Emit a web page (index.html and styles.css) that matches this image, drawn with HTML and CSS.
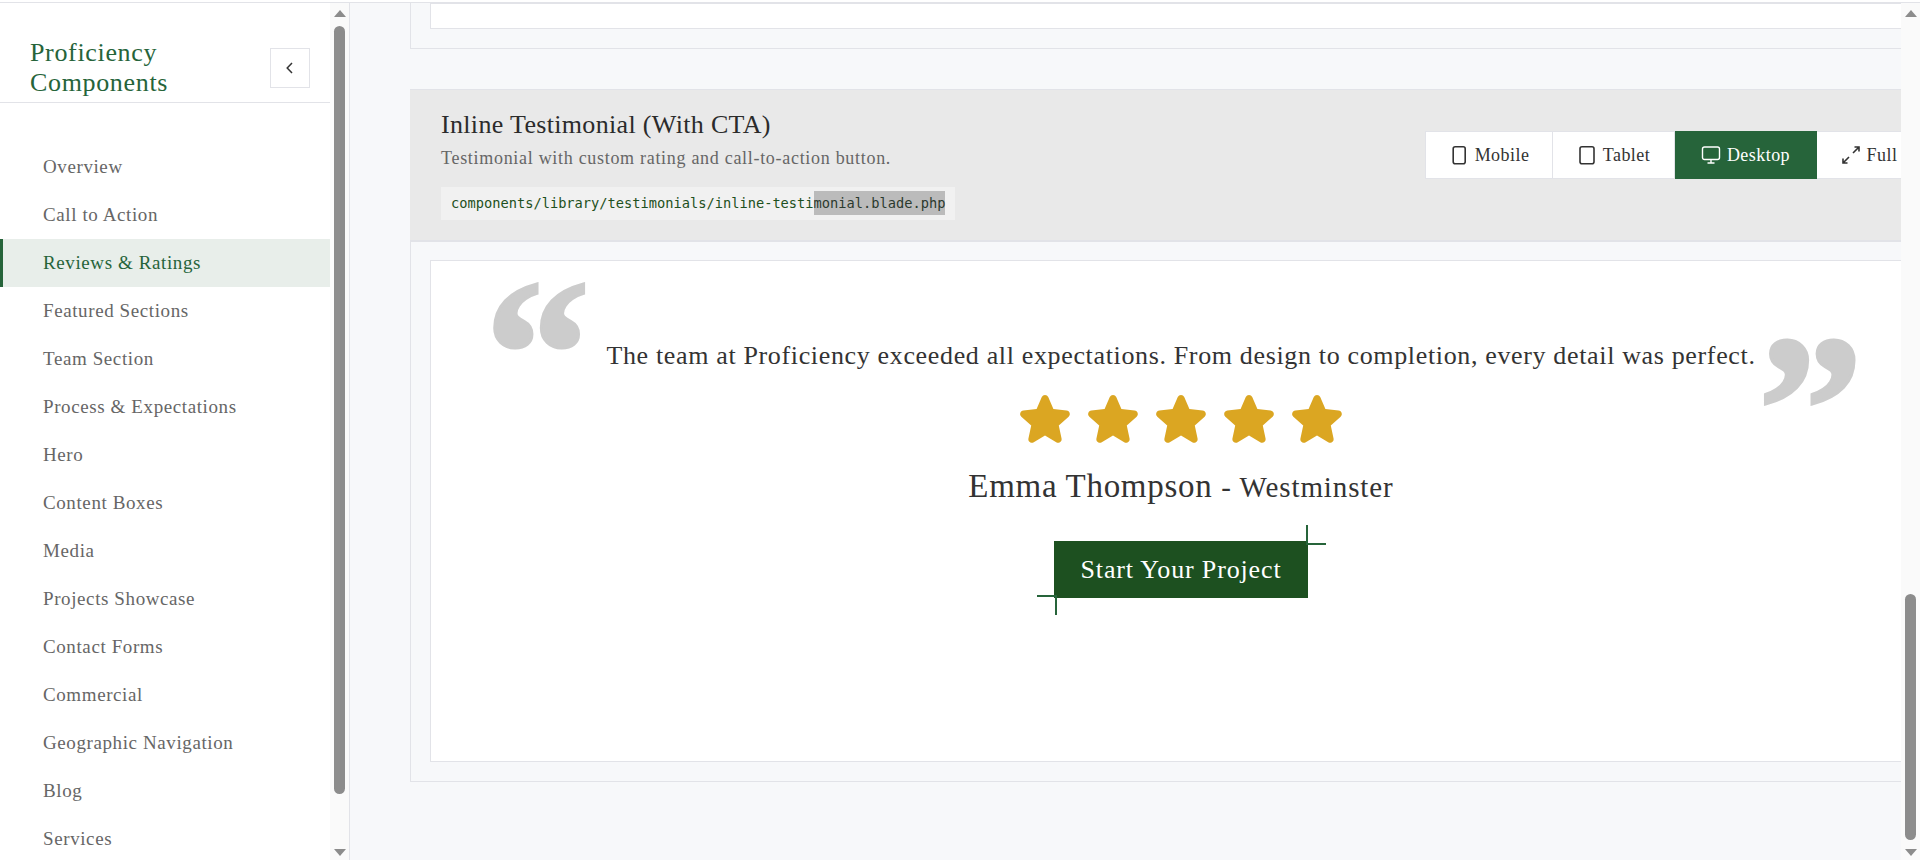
FILE: index.html
```html
<!DOCTYPE html>
<html lang="en">
<head>
    <meta charset="UTF-8">
    <title>Proficiency Components</title>
    <link rel="stylesheet" href="styles.css">
</head>
<body>

<div class="top-line"></div>

<div class="layout">
    <aside class="sidebar">
        <div class="sidebar-inner">
            <div class="sidebar-header">
                <h1>Proficiency Components</h1>
                <button class="collapse-btn">
                    <svg width="16" height="16" viewBox="0 0 16 16" fill="none" stroke="#333" stroke-width="1.5"><path d="M10 3 L5.2 8 L10 13"/></svg>
                </button>
            </div>
            <nav class="nav">
                <a class="nav-item" href="#">Overview</a>
                <a class="nav-item" href="#">Call to Action</a>
                <a class="nav-item active" href="#">Reviews &amp; Ratings</a>
                <a class="nav-item" href="#">Featured Sections</a>
                <a class="nav-item" href="#">Team Section</a>
                <a class="nav-item" href="#">Process &amp; Expectations</a>
                <a class="nav-item" href="#">Hero</a>
                <a class="nav-item" href="#">Content Boxes</a>
                <a class="nav-item" href="#">Media</a>
                <a class="nav-item" href="#">Projects Showcase</a>
                <a class="nav-item" href="#">Contact Forms</a>
                <a class="nav-item" href="#">Commercial</a>
                <a class="nav-item" href="#">Geographic Navigation</a>
                <a class="nav-item" href="#">Blog</a>
                <a class="nav-item" href="#">Services</a>
            </nav>
        </div>
        <div class="scrollbar">
            <span class="arrow-up"></span>
            <span class="thumb thumb-side"></span>
            <span class="arrow-down"></span>
        </div>
    </aside>

    <main class="main">
        <div class="section section-stub">
            <div class="preview-box stub-box"></div>
        </div>

        <section class="section">
            <div class="section-head">
                <div class="section-info">
                    <h2>Inline Testimonial (With CTA)</h2>
                    <p>Testimonial with custom rating and call-to-action button.</p>
                    <code>components/library/testimonials/inline-testi<span class="selected">monial.blade.php</span></code>
                </div>
                <div class="tabs">
                    <button class="tab">
                        <svg width="20" height="20" viewBox="0 0 20 20" fill="none" stroke="#333" stroke-width="1.6"><rect x="4.2" y="1.8" width="12" height="17" rx="2"/></svg>
                        <span>Mobile</span>
                    </button>
                    <button class="tab">
                        <svg width="20" height="20" viewBox="0 0 20 20" fill="none" stroke="#333" stroke-width="1.6"><rect x="3" y="1.8" width="14" height="17" rx="2"/></svg>
                        <span>Tablet</span>
                    </button>
                    <button class="tab current">
                        <svg width="20" height="20" viewBox="0 0 20 20" fill="none" stroke="#fff" stroke-width="1.4"><rect x="1.5" y="2" width="17" height="12.5" rx="2"/><path d="M10 14.5 V18 M6.5 18 H13.5"/></svg>
                        <span>Desktop</span>
                    </button>
                    <button class="tab">
                        <svg width="20" height="20" viewBox="0 0 20 20" fill="none" stroke="#333" stroke-width="1.6"><path d="M12 8 L18 2 M13.5 2 H18 V6.5 M8 12 L2 18 M2 13.5 V18 H6.5"/></svg>
                        <span>Full</span>
                    </button>
                </div>
            </div>
            <div class="section-body">
                <div class="preview-box">
                    <div class="testimonial">
                        <p class="quote">The team at Proficiency exceeded all expectations. From design to completion, every detail was perfect.</p>
                        <div class="stars">
                            <svg class="star" viewBox="0 0 24 24"><use href="#star-shape"/></svg>
                            <svg class="star" viewBox="0 0 24 24"><use href="#star-shape"/></svg>
                            <svg class="star" viewBox="0 0 24 24"><use href="#star-shape"/></svg>
                            <svg class="star" viewBox="0 0 24 24"><use href="#star-shape"/></svg>
                            <svg class="star" viewBox="0 0 24 24"><use href="#star-shape"/></svg>
                        </div>
                        <p class="author">Emma Thompson <span class="place">- Westminster</span></p>
                        <a class="cta" href="#">Start Your Project</a>
                    </div>
                </div>
            </div>
        </section>
    </main>

    <div class="scrollbar scrollbar-main">
        <span class="arrow-up"></span>
        <span class="thumb thumb-main"></span>
        <span class="arrow-down"></span>
    </div>
</div>

<svg class="defs" width="0" height="0">
    <symbol id="star-shape" viewBox="0 0 24 24">
        <path d="M10.79 3.79a1.35 1.35 0 0 1 2.42 0l1.94 4.49 4.95.5c1.17.12 1.64 1.55.77 2.33l-3.7 3.34 1.04 4.85c.25 1.15-.98 2.03-2 1.44L12 18.2l-4.21 2.54c-1.02.59-2.25-.29-2-1.44l1.04-4.85-3.7-3.34c-.87-.78-.4-2.21.77-2.33l4.95-.5z"/>
    </symbol>
</svg>

</body>
</html>
```

FILE: styles.css
```css
* {
    box-sizing: border-box;
}
body {
    margin: 0;
    height: 860px;
    overflow: hidden;
    background: #fff;
    font-family: "Liberation Serif", serif;
    color: #333;
}
.top-line {
    height: 3px;
    border-bottom: 1px solid #e2e3e8;
}
.layout {
    display: flex;
    height: 857px;
}
.defs {
    position: absolute;
}

/* sidebar */
.sidebar {
    width: 350px;
    flex: none;
    display: flex;
    border-right: 1px solid #e2e3e8;
    overflow: hidden;
}
.sidebar-inner {
    width: 330px;
    flex: none;
}
.sidebar-header {
    display: flex;
    justify-content: space-between;
    align-items: center;
    padding: 35px 20px 4px 30px;
    border-bottom: 1px solid #e2e3e8;
}
.sidebar-header h1 {
    margin: 0;
    width: 190px;
    font-size: 26px;
    font-weight: 400;
    line-height: 30px;
    letter-spacing: 0.66px;
    color: #26643a;
}
.collapse-btn {
    width: 40px;
    height: 40px;
    padding: 0;
    display: flex;
    align-items: center;
    justify-content: center;
    background: #fff;
    border: 1px solid #e2e3e8;
}
.nav {
    padding-top: 40px;
}
.nav-item {
    display: block;
    height: 48px;
    line-height: 48px;
    padding-left: 40px;
    border-left: 3px solid transparent;
    font-size: 19px;
    letter-spacing: 0.6px;
    color: #666;
    text-decoration: none;
}
.nav-item.active {
    background: #e8eeea;
    border-left-color: #26643a;
    color: #26643a;
}

/* scrollbars */
.scrollbar {
    width: 19px;
    flex: none;
    display: flex;
    flex-direction: column;
    align-items: center;
    background: #fafafa;
    padding: 7px 0 4px;
}
.arrow-up {
    width: 0;
    height: 0;
    border-left: 6.5px solid transparent;
    border-right: 6.5px solid transparent;
    border-bottom: 7px solid #8c8c8c;
}
.arrow-down {
    width: 0;
    height: 0;
    margin-top: auto;
    border-left: 6.5px solid transparent;
    border-right: 6.5px solid transparent;
    border-top: 7px solid #8c8c8c;
}
.thumb {
    width: 11px;
    background: #8c8c8c;
    border-radius: 6px;
}
.thumb-side {
    height: 768px;
    margin-top: 9px;
}
.thumb-main {
    height: 246px;
    margin-top: 577px;
}

/* main column */
.main {
    flex: 1;
    min-width: 0;
    overflow: hidden;
    background: #f7f8fa;
    padding-left: 60px;
}
.section {
    width: 1542px;
    border-left: 1px solid #e2e3e8;
    border-bottom: 1px solid #e2e3e8;
}
.section-stub {
    padding: 0 20px 19px 19px;
    margin-bottom: 40px;
}
.stub-box {
    height: 26px;
    border-top: 0;
}
.preview-box {
    background: #fff;
    border: 1px solid #e2e3e8;
}
.section-head {
    display: flex;
    justify-content: space-between;
    align-items: center;
    padding: 20px 26px 20px 31px;
    background: #e9e9e9;
    border-top: 1px solid #e2e3e8;
    border-bottom: 2px solid #e2e3e8;
    margin-left: -1px;
}
.section-info h2 {
    margin: 0;
    font-size: 26px;
    font-weight: 400;
    line-height: 30px;
    letter-spacing: 0.33px;
    color: #2b2b2b;
}
.section-info p {
    margin: 6px 0 17px;
    font-size: 18px;
    line-height: 24px;
    letter-spacing: 0.7px;
    color: #666;
}
.section-info code {
    display: block;
    width: 514px;
    height: 33px;
    line-height: 33px;
    padding-left: 10px;
    background: #f1f1f1;
    font-family: "DejaVu Sans Mono", monospace;
    font-size: 13.7px;
    color: #1d5020;
}
.selected {
    background: #bbb;
    color: #2b3a2e;
    padding: 4px 0;
}
.tabs {
    display: grid;
    grid-template-columns: 128px 122px 142px 105px;
    margin-bottom: 20px;
    height: 48px;
    margin-right: 4px;
}
.tab {
    display: flex;
    align-items: center;
    justify-content: center;
    gap: 6px;
    padding: 0;
    background: #fff;
    border: 1px solid #e2e3e8;
    border-left: 0;
    font-family: inherit;
    font-size: 18px;
    letter-spacing: 0.45px;
    color: #333;
}
.tab:first-child {
    border-left: 1px solid #e2e3e8;
}
.tab.current {
    background: #26643a;
    border-color: #26643a;
    color: #fff;
}
.section-body {
    padding: 18px 20px 19px 19px;
}

/* testimonial */
.testimonial {
    height: 500px;
    display: flex;
    flex-direction: column;
    align-items: center;
    padding-top: 77px;
}
.quote {
    position: relative;
    margin: 0;
    font-size: 26px;
    line-height: 36px;
    letter-spacing: 0.65px;
    text-align: center;
    color: #333;
}
.quote::before,
.quote::after {
    position: absolute;
    font-size: 212px;
    font-weight: 700;
    letter-spacing: 0;
    line-height: 1;
    color: #ccc;
    -webkit-text-stroke: 3px #ccc;
}
.quote::before {
    content: "\201C";
    left: -122px;
    top: -90px;
}
.quote::after {
    content: "\201D";
    right: -108px;
    top: -34px;
}
.stars {
    display: flex;
    gap: 4px;
    margin-top: 13px;
}
.star {
    width: 64px;
    height: 64px;
    fill: #dba622;
}
.author {
    margin: 15px 0 0;
    font-size: 33px;
    line-height: 40px;
    letter-spacing: 0.7px;
    color: #333;
}
.place {
    font-size: 29px;
    letter-spacing: 0.9px;
}
.cta {
    position: relative;
    display: block;
    width: 254px;
    height: 57px;
    margin-top: 34px;
    background: #1d5020;
    color: #fff;
    font-size: 26px;
    line-height: 57px;
    letter-spacing: 0.85px;
    text-align: center;
    text-decoration: none;
}
.cta::before,
.cta::after {
    content: "";
    position: absolute;
    width: 18px;
    height: 18px;
}
.cta::before {
    top: -16px;
    right: -18px;
    border-left: 2px solid #26643a;
    border-bottom: 2px solid #26643a;
}
.cta::after {
    bottom: -17px;
    left: -17px;
    border-top: 2px solid #26643a;
    border-right: 2px solid #26643a;
}
```
